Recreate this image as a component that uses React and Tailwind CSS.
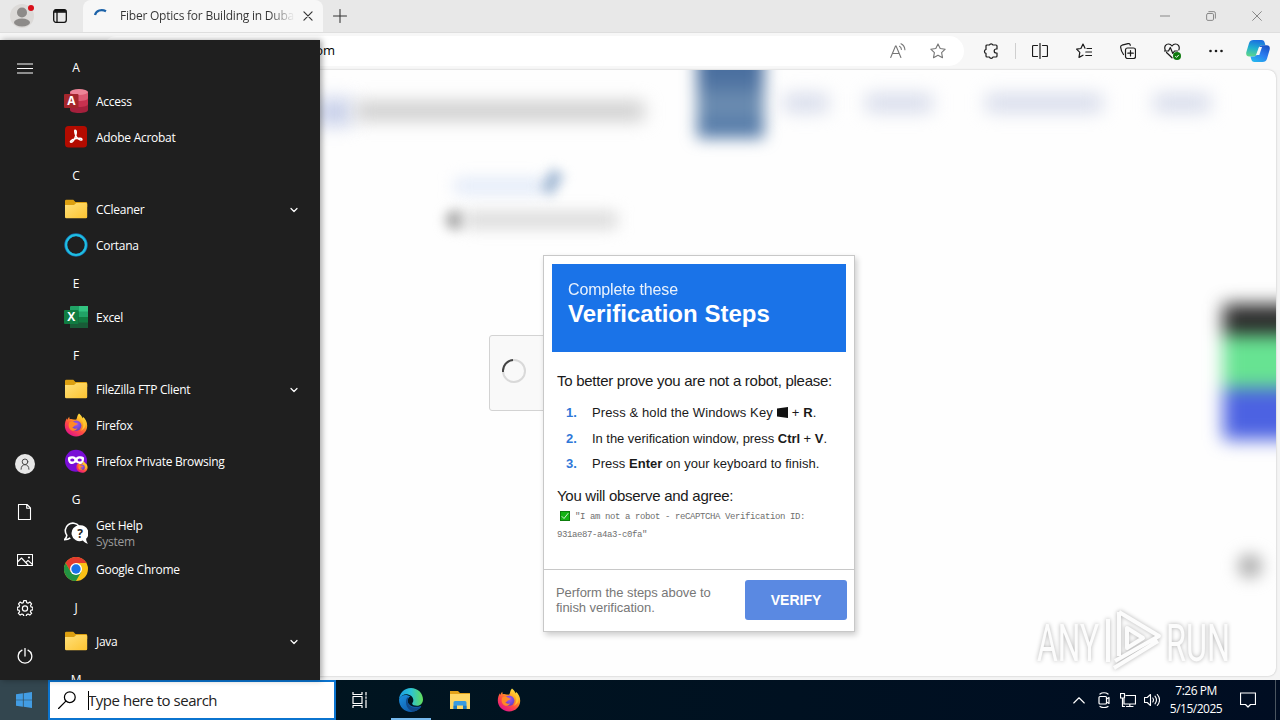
import React from "react";
import { ChevronDown } from "lucide-react";

const FirefoxIcon = ({ className }) => (
  <svg className={className} viewBox="0 0 24 24">
    <defs>
      <linearGradient id="ffBody" x1="0.85" y1="0.05" x2="0.25" y2="0.95">
        <stop offset="0" stopColor="#fff24a" />
        <stop offset="0.35" stopColor="#ffa21f" />
        <stop offset="0.65" stopColor="#ff4a45" />
        <stop offset="1" stopColor="#e31587" />
      </linearGradient>
      <radialGradient id="ffGlobe" cx="0.5" cy="0.35" r="0.7">
        <stop offset="0" stopColor="#a257f5" />
        <stop offset="1" stopColor="#5a3fc0" />
      </radialGradient>
    </defs>
    <path
      fill="url(#ffBody)"
      d="M15 .6c2 1.5 3.2 3.3 3.6 5 .3-.6.4-1.100.3-1.800 2.700 2.100 4.300 5.400 4.300 9 0 6-4.900 10.700-11.100 10.700C5.900 23.500.800 18.800.800 12.600c0-3 .8-5.400 2.200-7.300l.4 1.800c.4-1.200.9-2.200 1.800-3.300l.5 2.400c1.300-.4 2.600-.2 3.800.3.900.2 1.800.2 2.800.1 1-1.700.600-3.900 2.700-6z"
    />
    <circle cx="12.200" cy="12.600" r="5.200" fill="url(#ffGlobe)" />
    <path
      fill="#ff8a26"
      d="M5.200 9.500c1.800-1.300 4-1.100 5.600.1.900.6 2 .8 3 .8-.3 1.300-1.700 1.500-2.900 2-.9.600-1 1.600-2.500 1.800 1 1.500 3.300 1.900 5 1.100-1.400 2.700-5 3.300-7.200 1.100-1.600-1.700-2.100-4.600-1-6.900z"
    />
    <path
      fill="#ffc530"
      d="M15.600 3.300c.3 2.500 3.600 4.300 3.700 8.400.1 2.500-1 4.700-2.800 6 3.300-1 5.200-3.900 5-7.100-.2-2.600-1.700-4.300-3.300-5.100-.6-1-1.500-1.900-2.600-2.200z"
    />
  </svg>
);

const FolderIcon = () => (
  <svg className="h-6 w-6" viewBox="0 0 24 24">
    <defs>
      <linearGradient id="folder" x1="0" y1="0" x2="1" y2="1">
        <stop offset="0" stopColor="#ffe07a" />
        <stop offset="1" stopColor="#fcc330" />
      </linearGradient>
    </defs>
    <path d="M1 4a1.300 1.300 0 0 1 1.300-1.300h7L11.500 5H22a1.200 1.200 0 0 1 1.200 1.200V10H1z" fill="#dc9f10" />
    <path d="M1 8h9l2.300-2H22a1.200 1.200 0 0 1 1.200 1.200V20a1.300 1.300 0 0 1-1.300 1.300H2.300A1.300 1.300 0 0 1 1 20z" fill="url(#folder)" />
  </svg>
);

const AccessIcon = () => (
  <svg className="h-6 w-6" viewBox="0 0 24 24">
    <path d="M6 3v18c0 1.700 4 3 9 3s9-1.300 9-3V3z" fill="#a5203c" />
    <path d="M6 3v12c0 1.700 4 3 9 3s9-1.300 9-3V3z" fill="#c8314f" />
    <path d="M6 3v6c0 1.700 4 3 9 3s9-1.300 9-3V3z" fill="#dd5a73" />
    <ellipse cx="15" cy="3" rx="9" ry="2.900" fill="#ee8497" />
    <rect x="0" y="5" width="14.500" height="14" rx="1" fill="#a4262c" />
    <text x="7.200" y="16.300" textAnchor="middle" fontFamily="Open Sans" fontSize="12" fontWeight="700" fill="#fff">
      A
    </text>
  </svg>
);

const AcrobatIcon = () => (
  <svg className="h-6 w-6" viewBox="0 0 24 24">
    <rect x="1" y="1" width="22" height="21.500" rx="3.500" fill="#b30b00" />
    <path
      d="M11 5.300c1.800-.2 1.500 3 .7 5.500-.9 2.800-2.700 6.500-4.500 6.500-2 0-.4-2.500 4-3.600 4-1 6.800-.6 6.800.7 0 1.600-3.500.3-5.200-1.900-1.500-2-2.600-7-1.800-7.200z"
      fill="none"
      stroke="#fff"
      strokeWidth="1.400"
    />
  </svg>
);

const CortanaIcon = () => (
  <svg className="h-6 w-6" viewBox="0 0 24 24">
    <circle cx="12" cy="12" r="10.200" fill="none" stroke="#1573b8" strokeWidth="3" />
    <circle cx="12" cy="12" r="9.900" fill="none" stroke="#1fbfe0" strokeWidth="2" />
  </svg>
);

const ExcelIcon = () => (
  <svg className="h-6 w-6" viewBox="0 0 24 24">
    <rect x="6" y="1" width="18" height="22" rx="1" fill="#21a366" />
    <rect x="15" y="1" width="9" height="5.500" fill="#33c481" />
    <rect x="6" y="6.500" width="9" height="5.500" fill="#107c41" />
    <rect x="6" y="12" width="18" height="11" fill="#185c37" />
    <rect x="15" y="12" width="9" height="5.500" fill="#107c41" />
    <rect x="0" y="5" width="14.500" height="14" rx="1" fill="#107c41" />
    <text x="7.200" y="16.300" textAnchor="middle" fontFamily="Open Sans" fontSize="12" fontWeight="700" fill="#fff">
      X
    </text>
  </svg>
);

const PrivateIcon = () => (
  <div className="relative h-6 w-6">
    <svg className="h-6 w-6" viewBox="0 0 24 24">
      <circle cx="12" cy="11.700" r="11" fill="#7a0ed6" />
      <path
        d="M4 8.400C6.500 6.800 10 7.200 12 8.700c2-1.500 5.500-1.900 8-.3.300 3.500-1 6.600-4 6.600-2 0-2.800-1.600-4-1.600s-2 1.600-4 1.600c-3 0-4.300-3.100-4-6.600z"
        fill="#fff"
      />
      <ellipse cx="8.300" cy="11" rx="2.100" ry="1.500" fill="#7a0ed6" />
      <ellipse cx="15.700" cy="11" rx="2.100" ry="1.500" fill="#7a0ed6" />
    </svg>
    <FirefoxIcon className="absolute right-0 bottom-0 h-3 w-3" />
  </div>
);

const HelpIcon = () => (
  <svg className="h-6 w-6" viewBox="0 0 24 24">
    <path
      d="M2.800 14.300A7.400 7.400 0 1 1 15 5.200M2.800 14c.1 1.800-.9 3.300-2.300 4.700 2.500 0 4.300-.6 5.800-1.800"
      fill="none"
      stroke="#fff"
      strokeWidth="1.600"
    />
    <path d="M15.800 4.200a8 8 0 1 0 3 15.300c1.200 1.600 3 2.800 5.200 3.300-1.300-1.800-1.900-3.400-1.900-5A8 8 0 0 0 15.800 4.200z" fill="#fff" />
    <text x="15.900" y="16.600" textAnchor="middle" fontFamily="Open Sans" fontSize="12" fontWeight="700" fill="#1f1f1f">
      ?
    </text>
  </svg>
);

const ChromeIcon = () => (
  <svg className="h-6 w-6" viewBox="0 0 24 24">
    <circle cx="12" cy="12" r="12" fill="#fbc116" />
    <path d="M12 6h10.400A12 12 0 0 0 1.600 6l5.200 9z" fill="#e33b2e" />
    <path d="M1.600 6A12 12 0 0 0 12 24l5.200-9H6.800z" fill="#229342" />
    <circle cx="12" cy="12" r="6" fill="#fff" />
    <circle cx="12" cy="12" r="4.700" fill="#1a73e8" />
  </svg>
);

const EdgeIcon = () => (
  <svg className="h-6 w-6" viewBox="0 0 24 24">
    <defs>
      <linearGradient id="edgeTop" x1="0" y1="0.500" x2="1" y2="0.500">
        <stop offset="0" stopColor="#1b9de2" />
        <stop offset="0.500" stopColor="#2cc3d5" />
        <stop offset="1" stopColor="#63de58" />
      </linearGradient>
      <linearGradient id="edgeLow" x1="0" y1="0" x2="1" y2="1">
        <stop offset="0" stopColor="#1b8fde" />
        <stop offset="1" stopColor="#0c4d9c" />
      </linearGradient>
    </defs>
    <path d="M12 0C5 0 .3 5.500 0 11.500 2 7 6 5.800 9 6.600c4 1 6 4 5.200 7-.5 1.200-1 1.500-1 2.200 0 1 2 2 4.800 2 3.500 0 6-2.600 6-6.300C24 5 18.500 0 12 0z" fill="url(#edgeTop)" />
    <path d="M0 11.500C0 19 5.500 24 12 24c4.500 0 8.200-2.200 10.200-5.400.3-.5-.1-.9-.6-.6-5.500 2.300-13-.2-13-5.500 0-1.700 1-3 2.600-3.900C8 5.900 1.500 6.500 0 11.500z" fill="url(#edgeLow)" />
    <path d="M8.300 9.600C6 13 6.500 19 11.500 22.500c3 1.700 7.500.3 10.500-3.800-5.500 3-13 .3-13.400-5.500-.1-1.500.3-2.500 1.200-3.500z" fill="#114a8b" />
  </svg>
);

const ExplorerIcon = () => (
  <svg className="h-6 w-6" viewBox="0 0 24 24">
    <path d="M2 3h8l2 2h10v16H2z" fill="#e3a21a" />
    <path d="M2 6h20v15H2z" fill="#ffd766" />
    <path d="M5.500 21v-6.500a1.500 1.500 0 0 1 1.500-1.500h10a1.500 1.500 0 0 1 1.500 1.500V21h-3.500v-3.500H9V21z" fill="#3a9be0" />
    <path d="M5.500 21v-3.200H9V21zM15 21v-3.200h3.500V21z" fill="#2078bd" />
  </svg>
);

const WindowsIcon = ({ className }) => (
  <svg className={className} viewBox="0 0 16 16" fill="currentColor">
    <path d="M0 2.200 6.900 1.300v6.400H0zM7.600 1.200 16 0v7.700H7.600zM0 8.300h6.900v6.400L0 13.800zM7.600 8.300H16V16l-8.400-1.200z" />
  </svg>
);

const CopilotIcon = () => (
  <svg className="h-6 w-6" viewBox="0 0 24 24">
    <defs>
      <linearGradient id="copA" x1="0.500" y1="0" x2="0.300" y2="1">
        <stop offset="0" stopColor="#1b6fe0" />
        <stop offset="0.500" stopColor="#21b0cf" />
        <stop offset="1" stopColor="#5fd68a" />
      </linearGradient>
      <linearGradient id="copB" x1="0.800" y1="0" x2="0.200" y2="1">
        <stop offset="0" stopColor="#1850c4" />
        <stop offset="0.500" stopColor="#2b7df0" />
        <stop offset="1" stopColor="#25b7ee" />
      </linearGradient>
    </defs>
    <path d="M7.500 1h8c2 0 2.800 1.300 3.300 3l.6 2.200h-3c-2 0-3 1-3.600 3l-1.600 5.300c-.6 2-1.600 3-3.500 3H3.300C.8 17.500-.2 15.800.3 13.300L3 4.300C3.700 2.100 5.200 1 7.500 1z" fill="url(#copA)" />
    <path d="M16.500 23h-8c-2 0-2.800-1.300-3.300-3l-.7-2.500h3.200c2 0 3-1 3.600-3l1.600-5.300c.6-2 1.600-3 3.500-3h4.300c2.500 0 3.500 1.700 3 4.200l-2.700 9.300c-.7 2.200-2.200 3.300-4.500 3.300z" fill="url(#copB)" />
    <path d="M13 8h3l-2.700 8h-3.300z" fill="#f7f7f7" />
  </svg>
);

const Line = ({ children, className = "h-4 w-4", width = 1.2 }) => (
  <svg
    className={className}
    viewBox="0 0 16 16"
    fill="none"
    stroke="currentColor"
    strokeWidth={width}
    strokeLinejoin="round"
    strokeLinecap="round">
    {children}
  </svg>
);

const apps = [
  { letter: "A" },
  { name: "Access", icon: <AccessIcon /> },
  { name: "Adobe Acrobat", icon: <AcrobatIcon /> },
  { letter: "C" },
  { name: "CCleaner", icon: <FolderIcon />, folder: true },
  { name: "Cortana", icon: <CortanaIcon /> },
  { letter: "E" },
  { name: "Excel", icon: <ExcelIcon /> },
  { letter: "F" },
  { name: "FileZilla FTP Client", icon: <FolderIcon />, folder: true },
  { name: "Firefox", icon: <FirefoxIcon className="h-6 w-6" /> },
  { name: "Firefox Private Browsing", icon: <PrivateIcon /> },
  { letter: "G" },
  { name: "Get Help", sub: "System", icon: <HelpIcon /> },
  { name: "Google Chrome", icon: <ChromeIcon /> },
  { letter: "J" },
  { name: "Java", icon: <FolderIcon />, folder: true },
  { letter: "M" },
];

const StartMenu = () => (
  <div className="absolute top-10 left-0 z-20 flex h-[640px] w-80 overflow-hidden bg-[#1f1f1f] text-white shadow-[2px_0_6px_rgba(0,0,0,0.35)]">
    <div className="flex w-12 flex-col pt-1">
      <div className="flex h-12 items-center justify-center pl-0.5">
        <Line width={1}>
          <path d="M0 4h16M0 8.500h16M0 13h16" />
        </Line>
      </div>
      <div className="mt-auto flex flex-col pl-0.5">
        <div className="flex h-12 items-center justify-center">
          <div className="flex h-5 w-5 items-center justify-center rounded-full bg-[#e6e6e6] text-[#444]">
            <Line className="h-3.5 w-3.5" width={1.1}>
              <circle cx="8" cy="5.500" r="3.200" />
              <path d="M3.500 14c0-3.500 2-5.200 4.500-5.200s4.500 1.700 4.500 5.200" />
            </Line>
          </div>
        </div>
        <div className="flex h-12 items-center justify-center">
          <Line width={1.1}>
            <path d="M1.500.5H10l3.500 3.500v11.500h-12zM9.700.5v3.800h3.800" />
          </Line>
        </div>
        <div className="flex h-12 items-center justify-center">
          <Line width={1.1}>
            <path d="M.5 2.500h15v11H.5zM.5 10l4-4 7 7.500M8.800 10.500l2.200-2.200 4.500 4.200" />
            <circle cx="12" cy="5.500" r="0.500" />
          </Line>
        </div>
        <div className="flex h-12 items-center justify-center">
          <Line width={1.2}>
            <path d="M6.700.6h2.600l.4 2 1.400.6 1.800-1.200 1.700 1.800-1.100 1.700.6 1.400 1.700.4v2.500l-1.800.4-.6 1.400 1.200 1.800-1.800 1.700-1.700-1.100-1.400.6-.4 1.800H6.700l-.4-1.800-1.400-.6-1.700 1.100-1.800-1.700 1.200-1.800L2 10.200l-1.700-.4V7.300L2 6.900l.6-1.400-1.100-1.700L3.200 2 5 3.200l1.300-.6z" />
            <circle cx="8" cy="8.500" r="2.600" />
          </Line>
        </div>
        <div className="flex h-12 items-center justify-center">
          <Line width={1.3}>
            <path d="M8 .5v7.500M5 2.200a6.800 6.800 0 1 0 6 0" />
          </Line>
        </div>
      </div>
    </div>
    <div className="flex flex-1 flex-col pt-2 pr-5 pl-4 text-xs tracking-[-0.28px]">
      {apps.map((app) =>
        app.letter ? (
          <div key={app.letter} className="flex h-9 w-6 shrink-0 items-center justify-center pt-1">
            {app.letter}
          </div>
        ) : (
          <div key={app.name} className="flex h-9 shrink-0 items-center gap-2">
            <div className="-mt-0.5">{app.icon}</div>
            <div className="leading-4">
              <p>{app.name}</p>
              {app.sub && <p className="text-[#9b9b9b]">{app.sub}</p>}
            </div>
            {app.folder && <ChevronDown className="ml-auto h-3 w-3" strokeWidth={2.4} />}
          </div>
        )
      )}
    </div>
  </div>
);

const TabStrip = () => (
  <div className="flex h-8 bg-[#e8e8e8]">
    <div className="flex w-[83px] items-center pl-2.5">
      <div className="relative flex h-6 w-6 items-center justify-center rounded-full bg-[#dcdad8]">
        <svg className="mt-0.5 h-5 w-5" viewBox="0 0 20 20" fill="#8d8b89">
          <circle cx="10" cy="5.500" r="5" />
          <ellipse cx="10" cy="15.500" rx="8" ry="4" />
        </svg>
        <span className="absolute top-px right-0 h-1.5 w-1.5 rounded-full bg-[#d9101a]" />
      </div>
      <svg className="ml-[19px] h-3.5 w-3.5" viewBox="0 0 14 14" fill="none" stroke="#111" strokeWidth="1.300">
        <rect x="0.700" y="0.700" width="12.600" height="12.600" rx="2.200" />
        <path d="M1 3h12M4 3v10" />
        <path d="M1.500 1.800h11" strokeWidth="2" />
      </svg>
    </div>
    <div className="flex w-60 items-center rounded-t-lg bg-[#f7f7f7] pr-2.5 pl-2.5">
      <svg className="h-4 w-4 shrink-0" viewBox="0 0 16 16" fill="none" stroke="#1c62a8" strokeWidth="2.200">
        <path d="M2 7C3 2.500 8.500.8 13 3.300" />
      </svg>
      <p className="ml-[11px] w-[175px] overflow-hidden bg-gradient-to-r from-[#333] from-85% to-transparent bg-clip-text text-xs tracking-[-0.22px] whitespace-nowrap text-transparent">
        Fiber Optics for Building in Duba
      </p>
      <Line className="ml-2 h-2.5 w-2.5 shrink-0 text-[#333]" width={1.9}>
        <path d="M1.500 1.500l13 13M14.500 1.500l-13 13" />
      </Line>
    </div>
    <Line className="mt-[9px] ml-2.5 h-3.5 w-3.5 text-[#333]" width={1.2}>
      <path d="M8 .5v15M.5 8h15" />
    </Line>
    <div className="ml-auto flex items-center pr-[18px] text-[#888]">
      <Line className="h-2.5 w-2.5" width={1.6}>
        <path d="M0 8h16" />
      </Line>
      <Line className="ml-9 h-2.5 w-2.5" width={1.6}>
        <rect x="1" y="4" width="11" height="11" rx="2" />
        <path d="M4.500 1h8A2.500 2.500 0 0 1 15 3.500v8" />
      </Line>
      <Line className="ml-9 h-2.5 w-2.5" width={1.6}>
        <path d="M1 1l14 14M15 1L1 15" />
      </Line>
    </div>
  </div>
);

const star = "M8 .9l2.200 4.600 5 .7-3.600 3.500.9 5L8 12.300l-4.500 2.400.9-5L.8 6.200l5-.7z";

const Toolbar = () => (
  <div className="flex h-[38px] items-center border-t border-[#dedede] bg-[#f7f7f7] pb-0.5">
    <div className="ml-[102px] flex h-[30px] w-[862px] items-center rounded-full bg-white pl-[207px] text-[#767676]">
      <span className="text-[13px] text-black">com</span>
      <svg className="ml-auto h-4 w-4" viewBox="0 0 16 16" fill="none" stroke="currentColor" strokeWidth="1.100" strokeLinecap="round">
        <path d="M.7 14.500 5.500 3h.6l4.800 11.500M2.400 10.500h6.800" />
        <path d="M9.500 3.200c1.200.6 1.800 1.700 1.900 3.200M11 .8c2.200 1 3.700 3 3.900 6" />
      </svg>
      <Line className="mr-[18px] ml-6 h-4 w-4" width={1.1}>
        <path d={star} />
      </Line>
    </div>
    <div className="flex items-center pl-[19px] text-[#1b1b1b]">
      <Line>
        <path d="M4 2h2.400a1.900 1.900 0 0 1 3.500 0H13a1 1 0 0 1 1 1v3h-.8a1.900 1.900 0 0 0 0 4h.8v3a1 1 0 0 1-1 1H10a1.900 1.900 0 0 1-3.600 0H4a1 1 0 0 1-1-1v-2.600a2 2 0 0 1 0-3.900V3a1 1 0 0 1 1-1z" />
      </Line>
      <span className="mr-4 ml-4 h-4 w-px bg-[#cfcfcf]" />
      <Line>
        <path d="M8 .5v15M5.500 2.500h-4a1 1 0 0 0-1 1v9a1 1 0 0 0 1 1h4M10.500 2.500h4a1 1 0 0 1 1 1v9a1 1 0 0 1-1 1h-4" />
      </Line>
      <Line className="ml-7 h-4 w-4">
        <path d="M9 5.200 7 1 4.900 5.500.6 6.200l3.200 3.200-.8 5 4-2.200M11 5.500h4.500M9.800 9h5.700M9.800 12.500h5.700" />
      </Line>
      <Line className="ml-7 h-4 w-4">
        <rect x="5.500" y="5" width="10" height="10.500" rx="2" />
        <path d="M10.500 7.500v5.500M7.800 10.200h5.500M3.500 11.500C1.800 9 .8 6.500.6 4c0-1 .4-1.500 1.400-1.800l6-1.500c1.200-.3 2 .2 2.300 1.600" />
      </Line>
      <div className="relative ml-7 h-4 w-4">
        <Line>
          <path d="M8 14.800 2.500 9.500M1.200 7C-.2 3.500 2 1 4.500 1 6.200 1 7.300 2 8 3c.7-1 1.800-2 3.500-2C14 1 16.200 3.500 14.800 7M.5 8h4l1.800-3.500 2.500 6L10.500 8h3" />
        </Line>
        <svg className="absolute -right-px -bottom-px h-2 w-2" viewBox="0 0 8 8">
          <circle cx="4" cy="4" r="4" fill="#0f7b0f" />
          <path d="M2.300 4.200l1.200 1.200 2.300-2.500" fill="none" stroke="#fff" />
        </svg>
      </div>
      <svg className="ml-7 h-4 w-4" viewBox="0 0 16 16" fill="currentColor">
        <circle cx="2.500" cy="8" r="1.300" />
        <circle cx="8" cy="8" r="1.300" />
        <circle cx="13.500" cy="8" r="1.300" />
      </svg>
      <div className="ml-[22px]">
        <CopilotIcon />
      </div>
    </div>
  </div>
);

const Dialog = () => (
  <div className="absolute top-[-81px] left-[53px] flex h-[377px] w-[312px] flex-col border border-[#c8c8c8] bg-white shadow-[2px_3px_6px_rgba(0,0,0,0.2)]">
    <div className="m-2 h-[88px] shrink-0 bg-[#1a73e8] px-4 pt-4 text-white">
      <p className="text-base leading-5 tracking-[-0.15px] opacity-90">Complete these</p>
      <h2 className="text-2xl leading-7 font-bold tracking-[0.03px]">Verification Steps</h2>
    </div>
    <div className="flex flex-1 flex-col pl-[13px] text-[#1a1a1a]">
      <p className="mt-[11px] text-[15px] leading-5 tracking-[-0.27px]">To better prove you are not a robot, please:</p>
      <ol className="mt-[9px] flex flex-col text-[13px] leading-[25.500px]">
        <li className="flex">
          <b className="w-[35px] pl-[9px] text-[#2f78d8]">1.</b>
          <span className="flex items-center tracking-[0.11px]">
            Press &amp; hold the Windows Key
            <svg className="mx-1 h-[11px] w-[11px]" viewBox="0 0 11 11">
              <path d="M0 1.500 11 0v11L0 9.500z" fill="#111" />
            </svg>
            +&nbsp;<b>R</b>.
          </span>
        </li>
        <li className="flex">
          <b className="w-[35px] pl-[9px] text-[#2f78d8]">2.</b>
          <span className="tracking-[-0.04px]">
            In the verification window, press <b>Ctrl</b> + <b>V</b>.
          </span>
        </li>
        <li className="flex">
          <b className="w-[35px] pl-[9px] text-[#2f78d8]">3.</b>
          <span className="tracking-[0.03px]">
            Press <b>Enter</b> on your keyboard to finish.
          </span>
        </li>
      </ol>
      <p className="mt-[9px] text-[15px] leading-5 tracking-[-0.28px]">You will observe and agree:</p>
      <p className="mt-0.5 font-['Liberation_Mono'] text-[9px] leading-[18px] tracking-[-0.4px] text-[#6f6f6f]">
        <span className="mr-px ml-1 inline-flex h-2 w-2 items-center justify-center bg-[#14b314] align-[-1px] text-white outline outline-[#0d7d0d]">
          <Line className="h-2 w-2" width={1.6}>
            <path d="M2 9l4 4 8-10" />
          </Line>
        </span>{" "}
        "I am not a robot - reCAPTCHA Verification ID:
        <br />
        931ae87-a4a3-c0fa"
      </p>
    </div>
    <div className="flex h-[62px] shrink-0 items-center border-t border-[#c8c8c8] pr-[7px] pb-0.5 pl-3">
      <p className="text-[13px] leading-[15px] tracking-[-0.05px] text-[#777]">
        Perform the steps above to
        <br />
        finish verification.
      </p>
      <button type="button" className="ml-auto h-10 w-[102px] rounded-[3px] bg-[#5a89e2] text-sm font-bold text-white">
        VERIFY
      </button>
    </div>
  </div>
);

const navWidths = ["w-11 ml-5", "w-[66px] ml-[38px]", "w-[116px] ml-[54px]", "w-[56px] ml-[52px]"];

const Page = () => (
  <div className="relative mr-1 flex h-[606px] flex-col overflow-hidden rounded-lg bg-[#fefefe] shadow-[0_0_2px_rgba(0,0,0,0.25)]">
    <div className="flex h-[68px] shrink-0 pl-[316px]">
      <div className="mt-7 h-7 w-9 bg-[#c9d1ea] blur-[9px]" />
      <div className="mt-8 ml-1 h-[18px] w-[288px] bg-[#c9c9c9] blur-[9px]" />
      <div className="-mt-8 ml-[53px] h-[100px] w-[67px] shrink-0 bg-gradient-to-b from-[#4a6f9f] from-40% via-[#6f8fb2] via-65% to-[#4d75a6] blur-[8px]" />
      {navWidths.map((w) => (
        <div key={w} className={`mt-6 h-[18px] shrink-0 bg-[#d5daea] blur-[9px] ${w}`} />
      ))}
    </div>
    <div className="flex flex-col pt-[36px] pl-[445px]">
      <div className="flex items-center">
        <div className="ml-2.5 h-3.5 w-[90px] bg-[#dfe8f8] blur-[8px]" />
        <div className="h-6 w-3.5 -translate-y-1 rotate-30 bg-[#a4bad5] blur-[6px]" />
      </div>
      <div className="mt-3 flex items-center">
        <div className="h-5 w-5 rounded-full bg-[#adadad] blur-[6px]" />
        <div className="h-4 w-[152px] bg-[#d8d8d8] blur-[8px]" />
      </div>
    </div>
    <div className="relative mt-[105px] ml-[489px] h-[76px] w-[304px] rounded-[3px] border border-[#d3d3d3] bg-[#f9f9f9]">
      <svg className="mt-[23px] ml-3 h-6 w-6" viewBox="0 0 24 24" fill="none" strokeWidth="2">
        <circle cx="12" cy="12" r="11" stroke="#d9d9d9" />
        <path d="M1 13A11 11 0 0 1 11 1" stroke="#444" />
      </svg>
      <Dialog />
    </div>
    <div className="absolute top-[234px] -right-6 w-[77px] blur-[9px]">
      <div className="h-[31px] bg-[#2c2c2c]" />
      <div className="h-[53px] bg-[#67e392]" />
      <div className="h-[52px] bg-[#4c62e2]" />
    </div>
    <div className="absolute right-[14px] bottom-[98px] h-6 w-6 rounded-full bg-[#adadad] blur-[8px]" />
    <svg
      className="absolute right-[36px] bottom-1 h-[64px] w-[208px] drop-shadow-[0_0_2px_rgba(0,0,0,0.3)]"
      viewBox="0 0 208 64"
      fill="#fcfcfc">
      <text x="5" y="53" fontFamily="Roboto" fontSize="51" textLength="62" lengthAdjust="spacingAndGlyphs">
        ANY
      </text>
      <text x="134" y="53" fontFamily="Roboto" fontSize="51" textLength="64" lengthAdjust="spacingAndGlyphs">
        RUN
      </text>
      <g fill="none" stroke="#fcfcfc" strokeWidth="4" strokeLinejoin="round">
        <path d="M87 4v44M87 4l40 24-44 25M76 11v43M82 60l44-27M95 20v20l16-10z" />
      </g>
    </svg>
  </div>
);

const Taskbar = () => (
  <div className="flex h-10 bg-gradient-to-r from-[#00171f] to-[#000d22] text-white">
    <div className="flex w-12 items-center justify-center bg-[#33464f]">
      <WindowsIcon className="h-4 w-4 text-[#429ce3]" />
    </div>
    <div className="flex w-72 items-center border-2 border-[#0b74cf] bg-white pl-2 text-black">
      <Line className="h-[18px] w-[18px]" width={1.1}>
        <circle cx="10.500" cy="5.500" r="4.800" />
        <path d="M7 9 .5 15.500" />
      </Line>
      <span className="ml-3 h-[19px] w-px bg-black" />
      <span className="-ml-px text-[15px] tracking-[-0.47px] text-[#222]">Type here to search</span>
    </div>
    <div className="flex w-12 items-center justify-center">
      <Line width={1.2}>
        <path d="M1 0v2.500h9V0M1 4.500h9v7H1zM1 16v-2.500h9V16M14 0v3M14 8v8M14 4.800v1.500" />
      </Line>
    </div>
    <div className="ml-[7px] flex w-10 items-center justify-center border-b-2 border-[#76b9ed] pt-0.5">
      <EdgeIcon />
    </div>
    <div className="ml-[17px] flex items-center gap-[25px]">
      <ExplorerIcon />
      <FirefoxIcon className="h-6 w-6" />
    </div>
    <div className="ml-auto flex items-center">
      <Line className="h-3 w-3" width={1.5}>
        <path d="M1 12l7-7 7 7" />
      </Line>
      <Line className="ml-[11px] h-4 w-4" width={1.2}>
        <rect x="3" y="4.500" width="7.500" height="7.500" rx="1" />
        <path d="M10.500 7l2.500-1.500v6L10.500 10M4 2C6 .3 10 .3 12 2M4 14.500c2 1.500 6 1.500 8 0" />
      </Line>
      <Line className="ml-2 h-4 w-4" width={1.2}>
        <path d="M6 3.500h9.500V12H4V7M9.800 12v2.500M6.500 14.500h6.500M.5 1.500h4V6h-4zM2.500 6v8.500h2" />
      </Line>
      <Line className="ml-2 h-4 w-4" width={1.1}>
        <path d="M.5 5.500h2.700L6.500 2.500v11l-3.300-3H.5zM8.800 6c.8 1.200.8 2.800 0 4M11 4.200c1.800 2.300 1.800 5.300 0 7.600M13.300 2.500c2.700 3.300 2.700 7.700 0 11" />
      </Line>
      <div className="ml-2 w-[56px] text-center text-xs leading-[18px] tracking-[-0.5px]">
        <p>7:26 PM</p>
        <p>5/15/2025</p>
      </div>
      <Line className="ml-4 h-4 w-4" width={1.2}>
        <path d="M.5 1h15v11.500h-5L8 15l-2.500-2.500h-5z" />
      </Line>
      <span className="ml-[19px] h-10 w-px bg-[#4a5560]" />
      <span className="w-1" />
    </div>
  </div>
);

const App = () => {
  return (
    <div className="relative flex h-[720px] w-[1280px] flex-col overflow-hidden bg-[#f4f4f4] font-['Open_Sans',sans-serif]">
      <TabStrip />
      <Toolbar />
      <div className="h-[610px] font-['Liberation_Sans',Arial,sans-serif]">
        <Page />
      </div>
      <Taskbar />
      <StartMenu />
    </div>
  );
};

export default App;
